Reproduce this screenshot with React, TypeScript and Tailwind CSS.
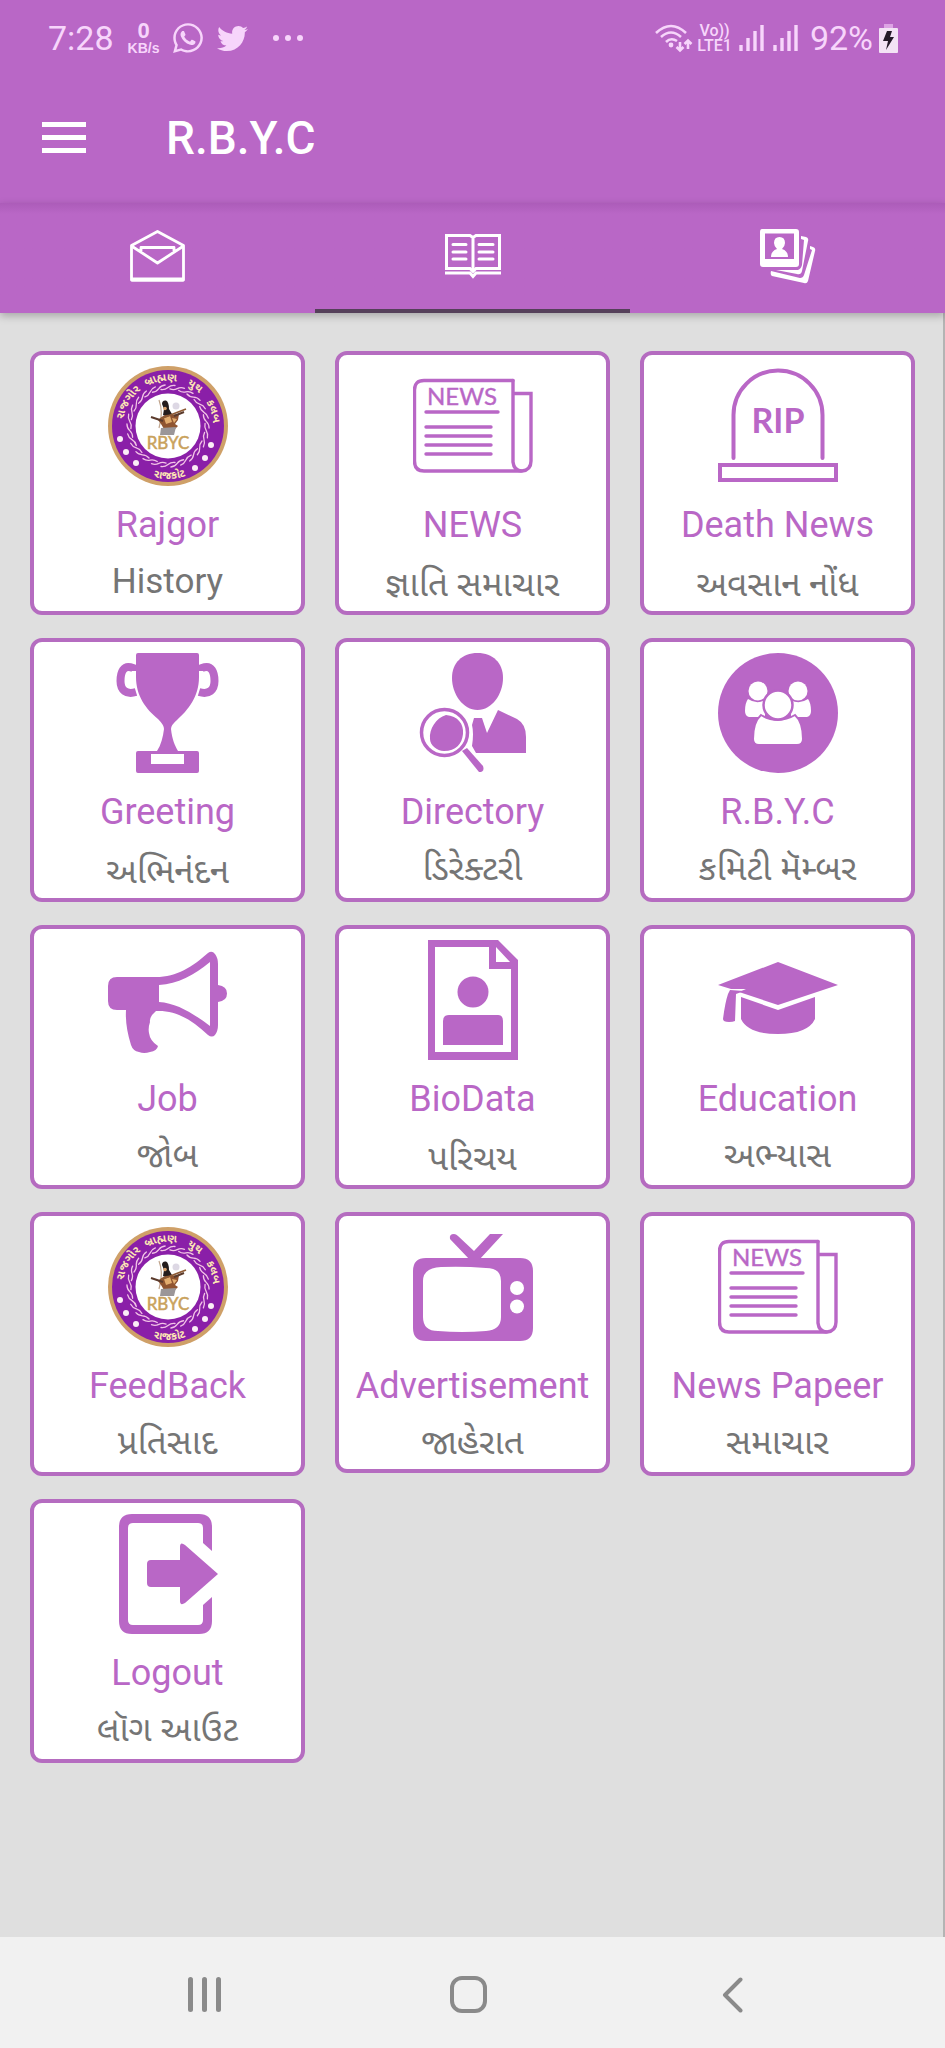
import type { ReactNode } from 'react';
import { FaTwitter, FaWhatsapp } from 'react-icons/fa';

const PURPLE = '#b967c6';

const Badge = () => (
  <svg viewBox="0 0 120 120" className="size-[120px]">
    <defs>
      <path id="badge-top" d="M15 60A45 45 0 0 1 105 60" />
      <path id="badge-bottom" d="M7 60A53 53 0 0 0 113 60" />
    </defs>
    <circle cx="60" cy="60" r="60" fill="#cfa068" />
    <circle cx="60" cy="60" r="56" fill="#8a1fa8" />
    <g stroke="#f2c3e6" strokeWidth="1.3" fill="none" strokeLinecap="round">
      {Array.from({ length: 26 }, (_, i) => (
        <path key={i} d="M53 23.500Q57 24 60 21.500T67 19.500" transform={`rotate(${(i * 360) / 26} 60 60)`} />
      ))}
    </g>
    <circle cx="60" cy="60" r="32.500" fill="#fff" />
    <g fill="#fde7b4" fontSize="11" fontWeight="700" textAnchor="middle" fontFamily="'Noto Sans Gujarati', 'Noto Sans', sans-serif">
      <text><textPath href="#badge-top" startOffset="17%">રાજગોર</textPath></text>
      <text><textPath href="#badge-top" startOffset="45%">બ્રાહ્મણ</textPath></text>
      <text><textPath href="#badge-top" startOffset="69%">યુથ</textPath></text>
      <text><textPath href="#badge-top" startOffset="90%">કલબ</textPath></text>
      <text><textPath href="#badge-bottom" startOffset="51%">રાજકોટ</textPath></text>
    </g>
    <g fill="#fbeef6">
      <circle cx="12" cy="73" r="3" />
      <circle cx="18" cy="86" r="3" />
      <circle cx="28" cy="97" r="3" />
      <circle cx="103" cy="79" r="3" />
      <circle cx="97" cy="92" r="3" />
      <circle cx="87" cy="102" r="3" />
    </g>
    <path d="M51 34C54 42 54 52 51 62" fill="none" stroke="#c0a48c" strokeWidth="1.2" />
    <circle cx="68" cy="40" r="3.500" fill="#ddd8e4" />
    <path d="M54 38Q54 34 58 34.500Q61 36 61 43L64 48L60 51L55 49L56 43Z" fill="#241c1c" />
    <circle cx="57" cy="42.500" r="1.800" fill="#d9a06c" />
    <path d="M50 54Q56 48 62 49L71 48L70 54L67 58L70 60L66 64L56 63L53 58Z" fill="#8f5430" />
    <path d="M56 52L62 50L64 56L58 58ZM64 52L69 53L66 57Z" fill="#e2ac6e" />
    <path d="M52 53L78 43" stroke="#8d5a34" strokeWidth="1.800" />
    <path d="M43 51L55 55M66 50L76 46" stroke="#5b3b2c" strokeWidth="2" />
    <path d="M53 62L68 61L66 69H52Z" fill="#9b9698" />
    <text x="60" y="83" textAnchor="middle" fontSize="17" fontFamily="Lato, sans-serif" fill="#c9a25c" stroke="#c9a25c" strokeWidth="0.5">RBYC</text>
  </svg>
);

const NewsIcon = () => (
  <svg viewBox="0 0 120 120" className="size-[120px]" fill="none" stroke={PURPLE} strokeWidth="3.400" strokeLinecap="round">
    <path d="M100 14.500H11Q1.500 14.500 1.500 24V95Q1.500 105 11 105H108" />
    <path d="M100 14.500V96Q101 105 109 105Q118 104 118 95V27.500H100" />
    <path d="M13 46H85M13 61H78M13 70H78M13 79H78M13 88H78" />
    <text x="14" y="39" fontSize="24" fontFamily="Lato, sans-serif" fill={PURPLE} stroke={PURPLE} strokeWidth="0.400">NEWS</text>
  </svg>
);

const TombIcon = () => (
  <svg viewBox="0 0 120 120" className="size-[120px]" fill="none" stroke={PURPLE} strokeWidth="4">
    <path d="M15.500 92V49A44.500 44.500 0 0 1 104.500 49V92" strokeLinecap="round" />
    <rect x="2" y="99" width="116" height="15" />
    <text x="60" y="67" textAnchor="middle" fontSize="34" fontWeight="700" fontFamily="Lato, sans-serif" fill={PURPLE} stroke="none">RIP</text>
  </svg>
);

const TrophyIcon = () => (
  <svg viewBox="0 0 120 120" className="size-[120px]" fill={PURPLE}>
    <path d="M30 0H89Q91 0 91 2V24C91 44 80 57 69 67Q63 72 63 76C64 86 67 93 70 98H89Q91 98 91 100V118Q91 120 89 120H30Q28 120 28 118V100Q28 98 30 98H49C53 92 55 84 56 76Q56 72 50 66C38 56 28 43 28 24V2Q28 0 30 0ZM43 101V111H76V101Z" fillRule="evenodd" />
    <g fill="none" stroke={PURPLE} strokeWidth="8">
      <path d="M25 18V15C15 11 12.500 20 12.500 28C12.500 37 18 42 28 39" />
      <path d="M94 18V15C104 11 106.500 20 106.500 28C106.500 37 101 42 91 39" />
    </g>
  </svg>
);

const DirectoryIcon = () => (
  <svg viewBox="0 0 120 120" className="size-[120px]" fill={PURPLE}>
    <path d="M64.500 0C80 0 90 10 90 25C90 41 79 57 64.500 57S39 41 39 25C39 10 49 0 64.500 0Z" />
    <path d="M85 57L104 66Q113 71 113 84V100H63L59 93Q61 80 59 72L61 65H69L74 80Z" />
    <circle cx="31.500" cy="79.500" r="23" fill="#fff" stroke={PURPLE} strokeWidth="3.500" />
    <path d="M33 62C45 63 51 71 50 81C49 91 43 98 31 98C24 98 17 92 17 86C16 76 23 65 33 62Z" />
    <path d="M49 98L54 95L70 113Q72 119 66 119Z" />
  </svg>
);

const CommitteeIcon = () => (
  <svg viewBox="0 0 120 120" className="size-[120px]" fill="#fff">
    <circle cx="60" cy="60" r="60" fill={PURPLE} />
    <circle cx="40" cy="38" r="9.500" />
    <circle cx="80" cy="38" r="9.500" />
    <path d="M30 46Q39 52 47 47V64H31Q27 63 27 58Q27 50 30 46Z" />
    <path d="M90 46Q81 52 73 47V64H89Q93 63 93 58Q93 50 90 46Z" />
    <path d="M43 62Q60 72 77 62Q85 69 85 86Q85 92 79 92H41Q35 92 35 86Q35 69 43 62Z" stroke={PURPLE} strokeWidth="2" />
    <circle cx="60" cy="52" r="14.500" stroke={PURPLE} strokeWidth="2.500" />
  </svg>
);

const JobIcon = () => (
  <svg viewBox="0 0 120 120" className="size-[120px]" fill={PURPLE}>
    <path d="M9 37H48C69 37 84 27 100 13Q104 10 107 14Q110 18 110 24V45Q119 46 119 53.500T110 62V85Q110 91 107 95Q104 98 100 95C84 80 68 70 48 71Q41 77 42 82Q40 88 41 93Q42 101 50 106Q49 111 42 112Q36 114 31 112Q25 111 23 105Q17 86 18 70H9Q0 70 0 61V46Q0 37 9 37ZM51 45V62C69 63 86 74 102 86V22C86 35 70 44 51 45Z" fillRule="evenodd" />
  </svg>
);

const BioDataIcon = () => (
  <svg viewBox="0 0 120 120" className="size-[120px]" fill={PURPLE}>
    <path d="M15 0H85L105 20V120H15ZM22 7V112H98V29H76V7ZM83 7V22H97Z" fillRule="evenodd" />
    <circle cx="60" cy="52" r="15.500" />
    <path d="M36 75H85Q90 75 90 81V105H30V81Q30 75 36 75Z" />
  </svg>
);

const EducationIcon = () => (
  <svg viewBox="0 0 120 120" className="size-[120px]" fill={PURPLE}>
    <path d="M60 22L120 45L60 65L21 52L28 49L13 49L0 45Z" />
    <path d="M23 57L60 70L97 57V79Q90 94 60 94T23 79Z" />
    <path d="M12 50L26 51L18 54L17 81Q15 82 11 82Q5 82 5 79Q7 63 10 54Z" />
  </svg>
);

const TvIcon = () => (
  <svg viewBox="0 0 120 120" className="size-[120px]" fill={PURPLE}>
    <path d="M13 31H107Q120 31 120 44V101Q120 114 107 114H13Q0 114 0 101V44Q0 31 13 31ZM28 40Q10 41 10 54V90Q10 104 25 104Q49 106 73 104Q88 103 88 90V54Q88 41 73 41Q50 39 28 40Z" fillRule="evenodd" />
    <circle cx="104" cy="61" r="7" fill="#fff" />
    <circle cx="104" cy="79.500" r="7" fill="#fff" />
    <path d="M37 12Q36 7 41 7Q43 7 45 9L61 24L77 7H90L66 33H57Z" />
  </svg>
);

const LogoutIcon = () => (
  <svg viewBox="0 0 120 120" className="size-[120px]" fill={PURPLE}>
    <path d="M104 37L95 29V14Q95 9 90 9H25Q20 9 20 14V106Q20 111 25 111H90Q95 111 95 106V91L104 83V107Q104 120 91 120H24Q11 120 11 107V13Q11 0 24 0H91Q104 0 104 13Z" />
    <path d="M43 46H72V33Q72 27 77 31L110 60L77 89Q72 92 72 87V73H43Q39 73 39 69V50Q39 46 43 46Z" />
  </svg>
);

type Card = { title: string; sub: string; icon: ReactNode; low?: boolean; short?: boolean };

const cards: Card[] = [
  { title: 'Rajgor', sub: 'History', icon: <Badge /> },
  { title: 'NEWS', sub: 'જ્ઞાતિ સમાચાર', icon: <NewsIcon />, low: true },
  { title: 'Death News', sub: 'અવસાન નોંધ', icon: <TombIcon />, low: true },
  { title: 'Greeting', sub: 'અભિનંદન', icon: <TrophyIcon />, low: true },
  { title: 'Directory', sub: 'ડિરેક્ટરી', icon: <DirectoryIcon /> },
  { title: 'R.B.Y.C', sub: 'કમિટી મૅમ્બર', icon: <CommitteeIcon /> },
  { title: 'Job', sub: 'જોબ', icon: <JobIcon /> },
  { title: 'BioData', sub: 'પરિચય', icon: <BioDataIcon />, low: true },
  { title: 'Education', sub: 'અભ્યાસ', icon: <EducationIcon /> },
  { title: 'FeedBack', sub: 'પ્રતિસાદ', icon: <Badge /> },
  { title: 'Advertisement', sub: 'જાહેરાત', icon: <TvIcon />, short: true },
  { title: 'News Papeer', sub: 'સમાચાર', icon: <NewsIcon /> },
  { title: 'Logout', sub: 'લૉગ આઉટ', icon: <LogoutIcon /> },
];

const MenuCard = ({ title, sub, icon, low, short }: Card) => (
  <button
    className={`flex flex-col items-center rounded-xl border-4 border-[#b56cc0] bg-white pt-[11px] ${short ? 'h-[261px]' : 'h-[264px]'}`}
  >
    {icon}
    <span className="mt-[18px] text-[36px] leading-[42px] whitespace-nowrap text-[#b967c6]">{title}</span>
    <span className={`text-[35px] leading-[42px] whitespace-nowrap text-[#757575] ${low ? 'mt-[18px]' : 'mt-[15px]'}`}>{sub}</span>
  </button>
);

const Signal = () => (
  <svg viewBox="0 0 26 28" className="h-7 w-[26px]" stroke="currentColor" strokeWidth="3.400">
    <path d="M3 21V27M10 14V27M17 7V27M24 1V27" />
  </svg>
);

const StatusBar = () => (
  <div className="flex h-[76px] items-center justify-between pr-[47px] pl-12 text-[#f7d5fb]">
    <div className="flex items-center">
      <span className="text-[34px] leading-none">7:28</span>
      <span className="ml-[14px] flex flex-col items-center font-['Liberation_Sans'] font-bold">
        <span className="text-[22px] leading-[20px]">0</span>
        <span className="text-[14px] leading-[14px]">KB/s</span>
      </span>
      <FaWhatsapp className="ml-3 size-[34px]" />
      <FaTwitter className="ml-3 size-[31px]" />
      <svg viewBox="0 0 32 8" className="ml-6 h-2 w-8" fill="currentColor">
        <circle cx="4" cy="4" r="3" />
        <circle cx="16" cy="4" r="3" />
        <circle cx="28" cy="4" r="3" />
      </svg>
    </div>
    <div className="flex items-center">
      <svg viewBox="0 0 38 29" className="h-[29px] w-[38px]" fill="none" stroke="currentColor" strokeWidth="2.600">
        <path d="M1 9Q16 -5 31 9M6 13Q16 4 26 13M11 18Q16 13 22 17" />
        <circle cx="16" cy="21" r="2.400" fill="currentColor" stroke="none" />
        <path d="M25 18V26M21.500 23L25 26.500L28.500 23M33 25V17M29.500 20L33 16.500L36.500 20" />
      </svg>
      <span className="ml-1 flex flex-col items-center text-[16px] leading-[15px] font-medium">
        <span>Vo))</span>
        <span>LTE1</span>
      </span>
      <span className="ml-[6px] flex gap-2">
        <Signal />
        <Signal />
      </span>
      <span className="ml-3 text-[34px] leading-none">92%</span>
      <svg viewBox="0 0 19 29" className="ml-[6px] h-[29px] w-[19px]">
        <path d="M5 0H14V4H5Z" fill="#dda3e4" />
        <rect y="4" width="19" height="25" rx="1" fill="#f3e3f5" />
        <path d="M8 7H13L11 13H15L7 26L9 17H4Z" fill="#241a28" />
      </svg>
    </div>
  </div>
);

const EnvelopeIcon = () => (
  <svg viewBox="0 0 55 52" className="h-[52px] w-[55px]" fill="none" stroke="#fff" strokeWidth="2.800" strokeLinejoin="round">
    <path d="M1.500 15.500L27.500 1.500L53.500 15.500V50H1.500Z" />
    <path d="M1.500 16L27.500 33L53.500 16M11 22V17.500H44V22" />
    <path d="M1.500 49.500H53.500" strokeWidth="4" />
  </svg>
);

const BookIcon = () => (
  <svg viewBox="0 0 56 45" className="h-[45px] w-14" fill="none" stroke="#fff" strokeWidth="3">
    <path d="M1.500 35V1.500H25L28 3.500L31 1.500H54.500V35M28 3V36" />
    <path d="M8 10.500H21M8 18H21M8 25H21M34 10.500H48M34 18H48M34 25H48" strokeLinecap="round" />
    <path d="M0 34.500H25L28 37.500L31 34.500H56M0 39H25L28 42.500L31 39H56" />
  </svg>
);

const PhotosIcon = () => (
  <svg viewBox="0 0 56 55" className="h-[55px] w-14" fill="#fff">
    <path d="M2 0H36Q39 0 39 3V35Q39 38 36 38H3Q0 38 0 35V3Q0 0 2 0ZM5 4.500V30H34V4.500Z" fillRule="evenodd" />
    <path d="M19.500 8Q25 8 25 14Q25 17 22 20Q28 22 28 28H11Q11 22 17 20Q14 17 14 14Q14 8 19.500 8Z" />
    <path d="M41 7L46 8Q49 9 48 12L42 42Q41 46 37 45L16 41L38 41Q41 40 42 36L44 11L41 10Z" />
    <path d="M50 17L53 18Q56 19 55 22L48 52Q47 55 44 54L12 47Q10 46 11 42L40 49Q43 49 44 46L52 21L50 20Z" />
  </svg>
);

const tabs = [
  { label: 'Messages', icon: <EnvelopeIcon /> },
  { label: 'Menu', icon: <BookIcon />, active: true },
  { label: 'Gallery', icon: <PhotosIcon /> },
];

export default function App() {
  return (
    <div className="flex min-h-screen flex-col bg-[#dfdfdf] font-['Roboto','Noto_Sans_Gujarati','Noto_Sans',sans-serif]">
      <header className="bg-[#b967c6]">
        <StatusBar />
        <div className="flex h-[127px] items-center pb-1 pl-[42px] text-white">
          <button aria-label="Open menu" className="flex w-11 flex-col gap-2">
            <span className="h-[5px] bg-white" />
            <span className="h-[5px] bg-white" />
            <span className="h-[5px] bg-white" />
          </button>
          <h1 className="ml-20 text-[46px] leading-none font-medium">R.B.Y.C</h1>
        </div>
      </header>

      <nav className="relative grid h-[110px] grid-cols-3 bg-linear-to-b from-[#ac5cb9] via-[#b967c6] via-10% to-[#b967c6] shadow-[0_3px_8px_rgba(0,0,0,0.25)]">
        {tabs.map((t) => (
          <button
            key={t.label}
            aria-label={t.label}
            className={`flex items-center justify-center border-b-4 ${t.active ? 'border-b-[#55405a]' : 'border-b-transparent'}`}
          >
            {t.icon}
          </button>
        ))}
      </nav>

      <main className="flex-1 border-r-2 border-[#b4b4b4] pt-[38px] pr-7 pb-10 pl-[30px]">
        <div className="grid grid-cols-3 items-start gap-x-[30px] gap-y-[23px]">
          {cards.map((c) => (
            <MenuCard key={c.title} {...c} />
          ))}
        </div>
      </main>

      <footer className="grid h-[111px] grid-cols-3 bg-[#f1f1f1] pt-1 pr-20 pl-[72px]">
        <button aria-label="Recent apps" className="flex items-center justify-center gap-[9px]">
          <span className="h-[35px] w-[5px] rounded-full bg-[#8a8a8a]" />
          <span className="h-[35px] w-[5px] rounded-full bg-[#8a8a8a]" />
          <span className="h-[35px] w-[5px] rounded-full bg-[#8a8a8a]" />
        </button>
        <button aria-label="Home" className="flex items-center justify-center">
          <span className="size-[37px] rounded-xl border-4 border-[#8a8a8a]" />
        </button>
        <button aria-label="Back" className="flex items-center justify-center">
          <svg viewBox="0 0 21 36" className="h-9 w-[21px]" fill="none" stroke="#8a8a8a" strokeWidth="4" strokeLinecap="round" strokeLinejoin="round">
            <path d="M18.500 2.500L3 18L18.500 33.500" />
          </svg>
        </button>
      </footer>
    </div>
  );
}
